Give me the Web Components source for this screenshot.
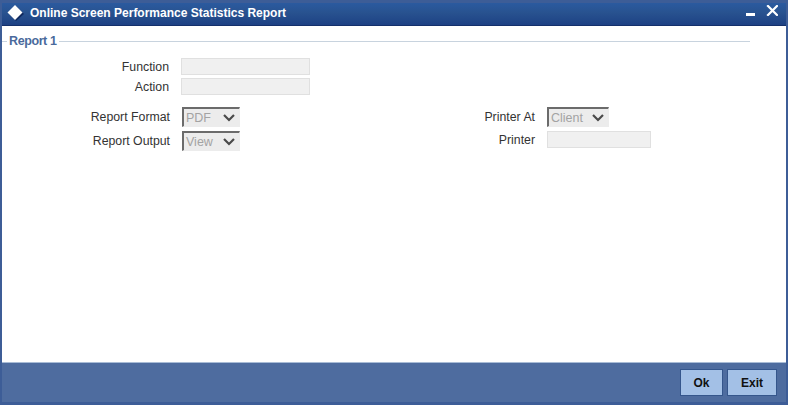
<!DOCTYPE html>
<html>
<head>
<meta charset="utf-8">
<style>
  html, body { margin: 0; padding: 0; }
  body { font: 12px "Liberation Sans", Arial, sans-serif; }
</style>
</head>
<body>
<report-window heading="Online Screen Performance Statistics Report">
  <report-group legend="Report 1">
    <div style="display:flex;flex-direction:column;gap:3px">
      <form-row label="Function" width="179"><text-box width="129"></text-box></form-row>
      <form-row label="Action" width="179"><text-box width="129"></text-box></form-row>
    </div>
    <div style="display:flex;margin-top:12px">
      <div style="display:flex;flex-direction:column;gap:4px;width:476px">
        <form-row label="Report Format" width="180"><select-box value="PDF" width="58"></select-box></form-row>
        <form-row label="Report Output" width="180"><select-box value="View" width="58"></select-box></form-row>
      </div>
      <div style="display:flex;flex-direction:column;gap:4px">
        <form-row label="Printer At" width="69"><select-box value="Client" width="62"></select-box></form-row>
        <form-row label="Printer" width="69"><text-box width="104"></text-box></form-row>
      </div>
    </div>
  </report-group>
  <action-button slot="actions" width="43">Ok</action-button>
  <action-button slot="actions" width="50">Exit</action-button>
</report-window>

<script>
class ReportWindow extends HTMLElement {
  constructor() {
    super();
    this.attachShadow({ mode: 'open' }).innerHTML = `
      <style>
        :host { display: flex; flex-direction: column; width: 788px; height: 405px; box-sizing: border-box;
                background: #3d5d97; padding: 3px 2px; overflow: hidden; }
        .title { flex: none; height: 23px; box-sizing: border-box; display: flex; align-items: center; padding: 0 8px 2px 5px;
                 background: linear-gradient(#2b5a9f, #28528f 45%, #1d4184); border-bottom: 1px solid #14306b; color: #fff; }
        .title svg { flex: none; display: block; }
        .controls { align-self: flex-start; margin-top: 2px; }
        h1 { flex: 1; margin: 0 0 0 6px; font: bold 12px "Liberation Sans", Arial, sans-serif; }
        .body { flex: 1; background: #fff; min-height: 0; }
        .foot { flex: none; height: 40px; border-top: 1px solid #a9bcd6; background: #4e6c9f;
                display: flex; justify-content: flex-end; align-items: flex-start; gap: 4px; padding: 6px 9px 0 0; box-sizing: border-box; }
      </style>
      <div class="title">
        <svg width="17" height="16" viewBox="0 0 17 16">
          <path d="M9 1 L17 9 L9 16 L2 9 Z" fill="#10295e"/>
          <path d="M8 0 L15.5 7.5 L8 15 L0.5 7.5 Z" fill="#fff"/>
        </svg>
        <h1></h1>
        <svg class="controls" width="32" height="11" viewBox="0 0 32 11" fill="#fff">
          <rect x="0" y="8" width="9" height="3"/>
          <path d="M22 1 L31 10 M31 1 L22 10" stroke="#fff" stroke-width="2.2" stroke-linecap="square"/>
        </svg>
      </div>
      <div class="body"><slot></slot></div>
      <div class="foot"><slot name="actions"></slot></div>`;
  }
  connectedCallback() {
    this.shadowRoot.querySelector('h1').textContent = this.getAttribute('heading');
  }
}

class ReportGroup extends HTMLElement {
  constructor() {
    super();
    this.attachShadow({ mode: 'open' }).innerHTML = `
      <style>
        :host { display: block; padding: 7px 0 0 0; }
        .legend { display: flex; align-items: center; height: 16px; margin-right: 36px; color: #4a6a9c;
                  font: bold 12.5px "Liberation Sans", Arial, sans-serif; letter-spacing: -.4px; }
        .legend::before { content: ""; width: 5px; height: 1px; background: #c8d3de; margin-right: 2px; }
        .legend::after { content: ""; flex: 1; height: 1px; background: #c8d3de; margin-left: 2px; }
        .content { padding-top: 9px; }
      </style>
      <div class="legend"></div>
      <div class="content"><slot></slot></div>`;
  }
  connectedCallback() {
    this.shadowRoot.querySelector('.legend').textContent = this.getAttribute('legend');
  }
}

class FormRow extends HTMLElement {
  constructor() {
    super();
    this.attachShadow({ mode: 'open' }).innerHTML = `
      <style>
        :host { display: flex; align-items: center; }
        label { text-align: right; color: #333; padding-right: 12px; box-sizing: border-box; font-size: 12.3px; }
      </style>
      <label></label><slot></slot>`;
  }
  connectedCallback() {
    const label = this.shadowRoot.querySelector('label');
    label.textContent = this.getAttribute('label');
    label.style.width = this.getAttribute('width') + 'px';
  }
}

class TextBox extends HTMLElement {
  constructor() {
    super();
    this.attachShadow({ mode: 'open' }).innerHTML = `
      <style>
        :host { display: block; height: 17px; box-sizing: border-box; background: #f0f0f0; border: 1px solid #e0e0e0; }
      </style>`;
  }
  connectedCallback() {
    this.style.width = this.getAttribute('width') + 'px';
  }
}

class SelectBox extends HTMLElement {
  constructor() {
    super();
    this.attachShadow({ mode: 'open' }).innerHTML = `
      <style>
        :host { display: flex; align-items: center; justify-content: space-between; height: 20px; box-sizing: border-box;
                background: #ececec; border: 1px solid #ececec; border-top: 2px solid #6b6b6b; border-left: 2px solid #6b6b6b;
                color: #a3a3a3; font-size: 12.5px; padding: 0 4px 0 2px; }
        svg { display: block; flex: none; }
      </style>
      <span></span>
      <svg width="12" height="8" viewBox="0 0 12 8"><path d="M1 1 L6 6 L11 1" fill="none" stroke="#4a4a4a" stroke-width="2.2"/></svg>`;
  }
  connectedCallback() {
    this.shadowRoot.querySelector('span').textContent = this.getAttribute('value');
    this.style.width = this.getAttribute('width') + 'px';
  }
}

class ActionButton extends HTMLElement {
  constructor() {
    super();
    this.attachShadow({ mode: 'open' }).innerHTML = `
      <style>
        :host { display: flex; align-items: center; justify-content: center; height: 27px; box-sizing: border-box;
                background: #a3c0e6; border: 1px solid #35568c; color: #111; font: bold 12px "Liberation Sans", Arial, sans-serif; }
      </style>
      <slot></slot>`;
  }
  connectedCallback() {
    this.style.width = this.getAttribute('width') + 'px';
  }
}

customElements.define('report-window', ReportWindow);
customElements.define('report-group', ReportGroup);
customElements.define('form-row', FormRow);
customElements.define('text-box', TextBox);
customElements.define('select-box', SelectBox);
customElements.define('action-button', ActionButton);
</script>
</body>
</html>
